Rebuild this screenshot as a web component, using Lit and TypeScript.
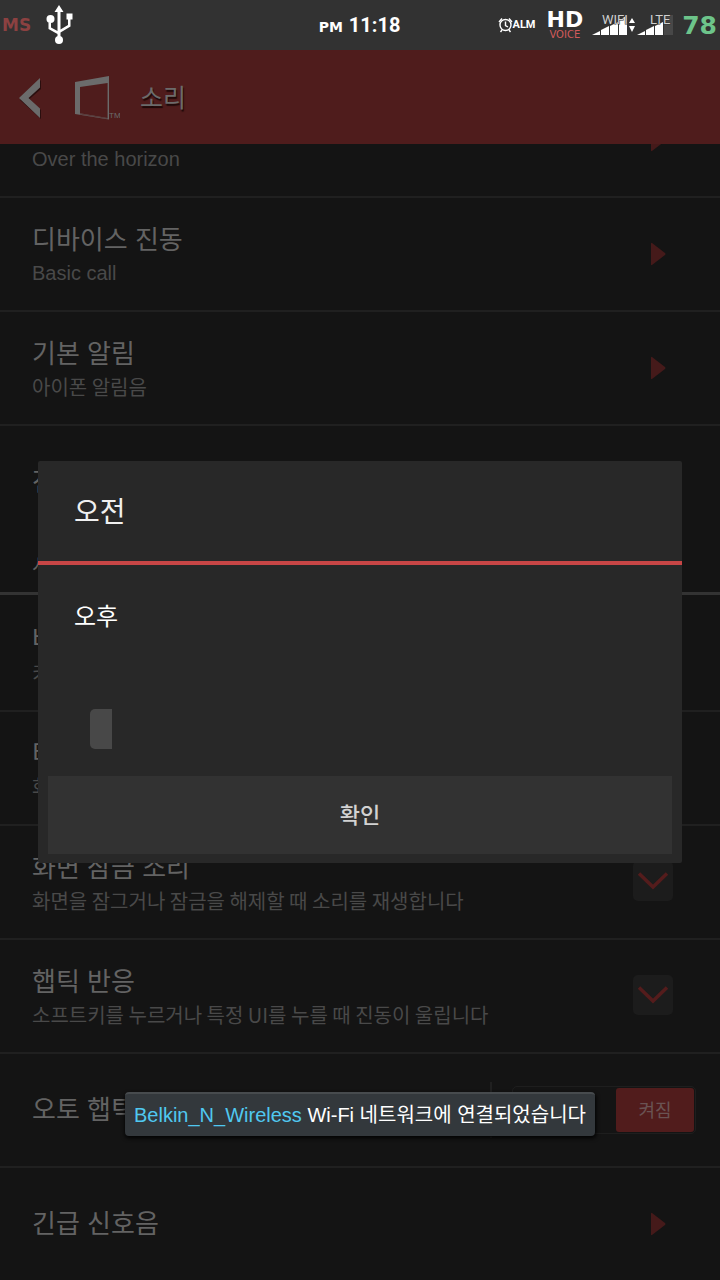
import { LitElement, html, css, nothing } from "lit";
import { customElement, property, state } from "lit/decorators.js";

type Kind = "link" | "check" | "switch" | "plain";

interface Row {
  id: string;
  title: string;
  sub?: string;
  latin?: boolean;
  kind: Kind;
}

const FONT = css`"Liberation Sans", "Noto Sans CJK KR", sans-serif`;

const SOUND_ROWS: Row[] = [
  { id: "ringtone", title: "벨소리", sub: "Over the horizon", latin: true, kind: "link" },
  { id: "vibration", title: "디바이스 진동", sub: "Basic call", latin: true, kind: "link" },
  { id: "notice", title: "기본 알림", sub: "아이폰 알림음", kind: "link" },
  { id: "strength", title: "전동", kind: "plain" },
];

const SYSTEM_ROWS: Row[] = [
  { id: "keytone", title: "버튼", sub: "키 누름", kind: "plain" },
  { id: "touch", title: "터치음", sub: "화면", kind: "plain" },
  { id: "lock", title: "화면 잠금 소리", sub: "화면을 잠그거나 잠금을 해제할 때 소리를 재생합니다", kind: "check" },
  { id: "haptic", title: "햅틱 반응", sub: "소프트키를 누르거나 특정 UI를 누를 때 진동이 울립니다", kind: "check" },
  { id: "auto", title: "오토 햅틱", kind: "switch" },
  { id: "emergency", title: "긴급 신호음", kind: "link" },
];

@customElement("status-bar")
class StatusBar extends LitElement {
  static styles = css`
    :host {
      display: flex;
      align-items: center;
      height: 50px;
      background: #323232;
      color: #fff;
      font-family: "DejaVu Sans", sans-serif;
      font-weight: bold;
      white-space: nowrap;
    }
    .side {
      flex: 1;
      display: flex;
      align-items: center;
    }
    .left { gap: 15px; padding-left: 2px; }
    .right { justify-content: flex-end; gap: 9px; padding-right: 3px; }
    .ms { color: #8c4141; font-size: 17px; }
    .clock { display: flex; align-items: baseline; gap: 6px; }
    .pm { font-size: 14px; }
    .time { font: bold 20px/40px Roboto, sans-serif; }
    .alarm { display: flex; align-items: center; margin-right: 2px; font: bold 11px/20px Roboto, sans-serif; }
    .hd { display: grid; justify-items: center; }
    .hd b { font-size: 22px; line-height: 20px; }
    .hd span { font-size: 10px; line-height: 10px; font-weight: normal; color: #d25a5a; }
    .signal { font: 13px Roboto, sans-serif; }
    .battery { color: #6dc48a; font-size: 25px; }
    svg { display: block; overflow: visible; }
  `;

  render() {
    return html`
      <div class="side left">
        <span class="ms">MS</span>
        <svg width="26" height="40" viewBox="0 0 26 40" fill="#fff" aria-label="USB">
          <path d="M13 0l4.500 7h-3v17.500l7.500-4.500v-5.500h-1.500V8.500h6v6h-2V21.500l-10 6V33h-3v-4L2.500 24v-6.500h2.500v5l6.500 3.500V7h-3z" />
          <circle cx="4.500" cy="14" r="4" />
          <circle cx="13" cy="35" r="4" />
        </svg>
      </div>
      <div class="clock"><span class="pm">PM</span><span class="time">11:18</span></div>
      <div class="side right">
        <div class="alarm">
          <svg width="15" height="16" viewBox="0 0 15 16" fill="none" stroke="#fff" stroke-width="1.400">
            <circle cx="7.500" cy="8" r="5.500" />
            <path d="M7.500 4.500V8.500l2.500 1.500M1 5l3-3.500M14 5l-3-3.500M4 13l-1.500 2M11 13l1.500 2" />
          </svg>ALM
        </div>
        <div class="hd"><b>HD</b><span>VOICE</span></div>
        <svg class="signal" width="81" height="24" viewBox="0 0 81 24">
          <g fill="#fff">
            <path d="M0 22l8-4v4zM9 22v-5l8-4v9zM18 22v-9l8-4v13zM27 22V8l8-6v20z" />
            <path d="M37 10l3-5 3 5zM37 13h6l-3 6z" />
            <path d="M45 22l8-4v4zM54 22v-5l8-4v9zM63 22v-9l8-4v13z" />
          </g>
          <path d="M72 2h9v20h-9z" fill="#484848" />
          <g fill="#d0d0d0" stroke="#323232" stroke-width="1" paint-order="stroke">
            <text x="10" y="11">WIFI</text>
            <text x="58" y="11">LTE</text>
          </g>
        </svg>
        <span class="battery">78</span>
      </div>
    `;
  }
}

@customElement("title-bar")
class TitleBar extends LitElement {
  static styles = css`
    :host {
      box-sizing: border-box;
      display: flex;
      align-items: center;
      height: 94px;
      padding-top: 2px;
      background: #4f1c1c;
      color: #6b6b6b;
      font-family: ${FONT};
      position: relative;
      z-index: 1;
    }
    .back {
      border: 0;
      background: none;
      padding: 0 0 0 19px;
      margin-right: 34px;
    }
    h1 { margin: 0 0 0 20px; font-size: 25px; line-height: 36px; font-weight: normal; text-shadow: 1px 2px 1px #1c0808; }
    svg { display: block; }
  `;

  render() {
    return html`
      <button class="back" aria-label="뒤로">
        <svg width="22" height="42" viewBox="0 0 22 42">
          <path d="M22 3v9L10.500 22 22 33v9L1 23z" fill="#2a0e0e" />
          <path d="M21 1v9.500L9.500 21 21 31.500V41L0 21z" fill="#6b6b6b" />
        </svg>
      </button>
      <svg width="45" height="46" viewBox="0 0 45 46">
        <path d="M0 7L34 1v43.500L0 39zM5 12v26.200L32.600 43V8z" fill="#6b6b6b" fill-rule="evenodd" />
        <path d="M5 38.200V39.500L32.500 44V43z" fill="#4f1c1c" opacity=".6" />
        <text x="34" y="43" font-size="8" fill="#6b6b6b">TM</text>
      </svg>
      <h1>소리</h1>
    `;
  }
}

@customElement("setting-row")
class SettingRow extends LitElement {
  @property({ attribute: false }) row!: Row;
  @state() private on = true;

  static styles = css`
    :host { display: block; color: #636363; font-family: ${FONT}; }
    .row {
      box-sizing: border-box;
      display: flex;
      align-items: center;
      min-height: 114px;
      padding: 0 47px 0 32px;
      border-bottom: 2px solid #202020;
      color: inherit;
      text-decoration: none;
    }
    .bare { border-color: transparent; }
    .with-switch { padding-right: 24px; }
    .text { flex: 1; min-width: 0; }
    .title { display: block; font-size: 26px; line-height: 38px; }
    .sub { display: block; font-size: 20px; line-height: 28px; color: #494949; font-family: "Noto Sans CJK KR", sans-serif; }
    .latin { font-family: ${FONT}; }
    .arrow { display: block; margin-right: 7px; }
    .check { display: grid; margin-bottom: 2px; }
    .check > * { grid-area: 1 / 1; }
    .check input {
      appearance: none;
      width: 40px;
      height: 40px;
      margin: 0;
      border-radius: 5px;
      background: #1c1c1c;
    }
    .check svg { pointer-events: none; }
    .rule { width: 2px; height: 56px; margin-right: 20px; background: #202020; }
    .switch {
      box-sizing: border-box;
      display: flex;
      justify-content: flex-end;
      width: 184px;
      height: 48px;
      padding: 1px;
      border: 1px solid #1e1e1e;
      border-radius: 5px;
    }
    .switch input { position: absolute; opacity: 0; }
    .thumb {
      width: 78px;
      border-radius: 3px;
      background: #511c1c;
      font-size: 18px;
      line-height: 46px;
      height: 44px;
      text-align: center;
      color: #6a5353;
    }
  `;

  private toggle() {
    this.on = !this.on;
  }

  private control(row: Row) {
    switch (row.kind) {
      case "link":
        return html`<svg class="arrow" width="16" height="24" viewBox="0 0 16 24"><path d="M1 1.500Q1 .5 2 1L15 11Q16 12 15 13L2 23Q1 23.500 1 22.500z" fill="#451a1a" /></svg>`;
      case "check":
        return html`<span class="check">
          <input type="checkbox" id=${row.id} .checked=${this.on} @change=${this.toggle} />
          ${this.on
            ? html`<svg width="40" height="40" viewBox="0 0 40 40"><path d="M6 12.500L20 26 34 12.500" fill="none" stroke="#541c1c" stroke-width="3.500" /></svg>`
            : nothing}
        </span>`;
      case "switch":
        return html`<span class="rule"></span>
          <span class="switch">
            <input type="checkbox" role="switch" id=${row.id} .checked=${this.on} @change=${this.toggle} />
            <span class="thumb">켜짐</span>
          </span>`;
      default:
        return nothing;
    }
  }

  render() {
    const { row } = this;
    const body = html`
      <span class="text">
        <span class="title">${row.title}</span>
        ${row.sub ? html`<span class="sub ${row.latin ? "latin" : ""}">${row.sub}</span>` : nothing}
      </span>
      ${this.control(row)}
    `;
    if (row.kind === "link") return html`<a class="row" href="#${row.id}">${body}</a>`;
    if (row.kind === "plain") return html`<div class="row ${row.sub ? "" : "bare"}">${body}</div>`;
    return html`<label class="row ${row.kind === "switch" ? "with-switch" : ""}" for=${row.id}>${body}</label>`;
  }
}

@customElement("app-root")
class AppRoot extends LitElement {
  static styles = css`
    :host {
      display: flex;
      flex-direction: column;
      position: relative;
      height: 100vh;
      overflow: hidden;
      background: #141414;
      font-family: ${FONT};
    }
    status-bar, title-bar { flex: none; }
    .list { flex: 1; min-height: 0; overflow: hidden; }
    .scrolled { margin-top: -60px; }
    h2 {
      margin: 0 0 3px;
      padding: 12px 32px;
      border-bottom: 3px solid #333;
      font-size: 20px;
      line-height: 28px;
      font-weight: normal;
      color: #5f5f5f;
    }
    .overlay {
      position: absolute;
      inset: 50px 0 6px;
      z-index: 2;
      display: flex;
      align-items: center;
      justify-content: center;
      padding: 0 38px;
    }
    .dialog {
      flex: 1;
      border-radius: 2px;
      background: #282828;
      color: #f0f0f0;
    }
    .dialog h3 {
      margin: 0;
      padding: 32px 36px 28px;
      border-bottom: 4px solid #c84646;
      font-size: 28px;
      line-height: 40px;
      font-weight: normal;
    }
    .dialog p { margin: 0; padding: 36px 36px 0; font-size: 24px; line-height: 32px; color: #fff; }
    .chip {
      width: 22px;
      height: 40px;
      margin: 76px 52px 27px;
      border-radius: 5px 0 0 5px;
      background: #484848;
    }
    .actions { display: flex; padding: 0 10px 9px; }
    .actions button {
      flex: 1;
      height: 78px;
      padding: 2px 0 0;
      border: 0;
      background: #323232;
      color: #d2d2d2;
      font: 500 22px/32px ${FONT};
    }
    .toast {
      position: absolute;
      z-index: 3;
      left: 50%;
      bottom: 144px;
      transform: translateX(-50%);
      box-sizing: border-box;
      height: 44px;
      padding: 0 9px;
      border-top: 2px solid #474b4e;
      border-radius: 4px;
      background: #33383c;
      box-shadow: 0 2px 4px #000;
      font-size: 20px;
      line-height: 42px;
      white-space: nowrap;
      color: #fff;
    }
    .toast span { color: #50c8f0; }
  `;

  render() {
    return html`
      <status-bar></status-bar>
      <title-bar></title-bar>
      <main class="list">
        <div class="scrolled">
          ${SOUND_ROWS.map((row) => html`<setting-row .row=${row}></setting-row>`)}
          <h2>시스템</h2>
          ${SYSTEM_ROWS.map((row) => html`<setting-row .row=${row}></setting-row>`)}
        </div>
      </main>
      <div class="overlay">
        <section class="dialog" role="dialog" aria-labelledby="dialog-title">
          <h3 id="dialog-title">오전</h3>
          <p>오후</p>
          <div class="chip"></div>
          <div class="actions"><button>확인</button></div>
        </section>
      </div>
      <div class="toast" role="status"><span>Belkin_N_Wireless</span> Wi-Fi 네트워크에 연결되었습니다</div>
    `;
  }
}
